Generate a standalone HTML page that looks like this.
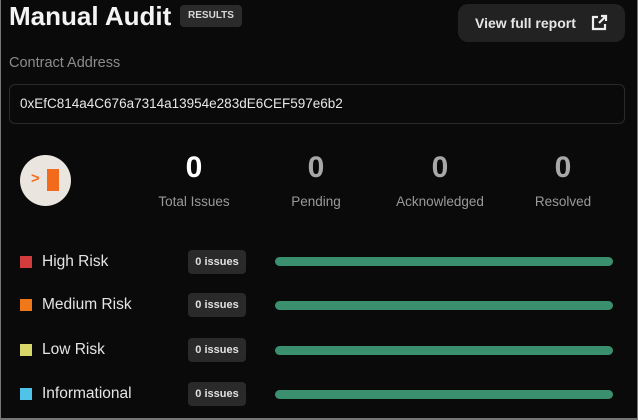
<!DOCTYPE html>
<html><head><meta charset="utf-8"><style>
*{margin:0;padding:0;box-sizing:border-box}
html,body{width:638px;height:420px;overflow:hidden;background:#0a0a0a;font-family:"Liberation Sans",sans-serif}
.frame{position:absolute;left:0;top:0;width:638px;height:420px;border-left:1px solid #777;border-right:1px solid #777;border-bottom:2px solid #777}
.abs{position:absolute}
h1{position:absolute;left:9px;top:1px;font-size:26px;font-weight:bold;color:#f4f4f4;letter-spacing:0px}
.res{left:180px;top:5px;width:62px;height:22px;background:#2b2b2b;border-radius:4px;color:#d8d8d8;font-size:10px;font-weight:bold;text-align:center;line-height:22px}
.btn{left:458px;top:4px;width:167px;height:38px;background:#222;border-radius:10px;color:#e6e6e6;font-size:14px;font-weight:bold;line-height:38px;padding-left:17px}
.lbl{left:9px;top:55px;font-size:14.5px;color:#8c8c8c}
.addr{left:9px;top:84px;width:616px;height:40px;border:1px solid #2a2a2a;border-radius:6px;color:#e8e8e8;font-size:13.5px;line-height:38px;padding-left:10px}
.circ{left:20px;top:155px;width:51px;height:51px;border-radius:50%;background:#ebe5df}
.stat{width:140px;text-align:center}
.num{font-size:30px;font-weight:bold;color:#a8a8a8;top:151px}
.sl{font-size:13.5px;color:#9a9a9a;top:194px}
.sq{left:20px;width:12px;height:12px}
.rl{left:42px;font-size:15.5px;color:#e4e4e4}
.bd{left:188px;width:58px;height:24px;background:#2a2a2a;border-radius:4px;color:#e0e0e0;font-size:11px;font-weight:bold;text-align:center;line-height:24px}
.bar{left:275px;width:338px;height:9px;background:#3a8f6e;border-radius:5px}
</style></head><body>
<div class="frame"></div>
<h1>Manual Audit</h1>
<div class="abs res">RESULTS</div>
<div class="abs btn">View full report
<svg class="abs" style="left:132px;top:10px" width="18" height="18" viewBox="0 0 18 18" fill="none" stroke="#eee" stroke-width="2.2"><path d="M8 3H3v12h12v-5"/><path d="M9 9l7-7M11 2h5v5"/></svg></div>
<div class="abs lbl">Contract Address</div>
<div class="abs addr">0xEfC814a4C676a7314a13954e283dE6CEF597e6b2</div>
<div class="abs circ">
<div class="abs" style="left:11px;top:15px;color:#f26a1b;font-size:15px;font-weight:bold">&gt;</div>
<div class="abs" style="left:27px;top:14px;width:12px;height:22px;background:#f26a1b"></div>
</div>
<div class="abs stat num" style="left:124px;color:#fff">0</div>
<div class="abs stat num" style="left:246px">0</div>
<div class="abs stat num" style="left:370px">0</div>
<div class="abs stat num" style="left:493px">0</div>
<div class="abs stat sl" style="left:124px">Total Issues</div>
<div class="abs stat sl" style="left:246px">Pending</div>
<div class="abs stat sl" style="left:370px">Acknowledged</div>
<div class="abs stat sl" style="left:493px">Resolved</div>

<div class="abs sq" style="top:256px;background:#d23c3c"></div>
<div class="abs rl" style="top:253px">High Risk</div>
<div class="abs bd" style="top:250px">0 issues</div>
<div class="abs bar" style="top:257px"></div>

<div class="abs sq" style="top:299px;background:#f07818"></div>
<div class="abs rl" style="top:296px">Medium Risk</div>
<div class="abs bd" style="top:293px">0 issues</div>
<div class="abs bar" style="top:301px"></div>

<div class="abs sq" style="top:344px;background:#d8d86a"></div>
<div class="abs rl" style="top:341px">Low Risk</div>
<div class="abs bd" style="top:338px">0 issues</div>
<div class="abs bar" style="top:346px"></div>

<div class="abs sq" style="top:388px;background:#4fc3e8"></div>
<div class="abs rl" style="top:385px">Informational</div>
<div class="abs bd" style="top:382px">0 issues</div>
<div class="abs bar" style="top:390px"></div>
</body></html>
